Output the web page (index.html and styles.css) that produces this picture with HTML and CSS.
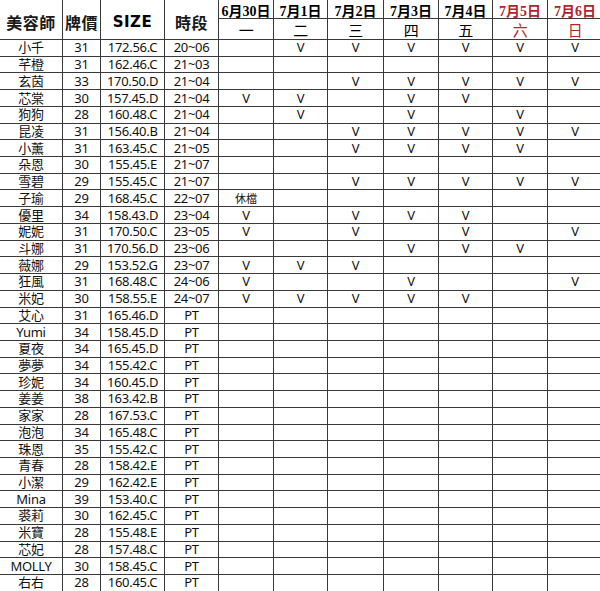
FILE: index.html
```html
<!DOCTYPE html>
<html lang="zh-Hant">
<head>
<meta charset="utf-8">
<title>班表</title>
<link rel="stylesheet" href="styles.css">
</head>
<body>
<div class="sheet">
<div class="hl title">美容師</div><div class="hl title">牌價</div><div class="hl size">SIZE</div><div class="hl title">時段</div>
<div class="date">6月30日</div><div class="date">7月1日</div><div class="date">7月2日</div><div class="date">7月3日</div><div class="date">7月4日</div><div class="date red">7月5日</div><div class="date red">7月6日</div>
<div class="wd">一</div><div class="wd">二</div><div class="wd">三</div><div class="wd">四</div><div class="wd">五</div><div class="wd red">六</div><div class="wd red">日</div>

<div>小千</div><div>31</div><div>172.56.C</div><div>20~06</div><div></div><div>V</div><div>V</div><div>V</div><div>V</div><div>V</div><div>V</div>
<div>芊橙</div><div>31</div><div>162.46.C</div><div>21~03</div><div></div><div></div><div></div><div></div><div></div><div></div><div></div>
<div>玄茵</div><div>33</div><div>170.50.D</div><div>21~04</div><div></div><div></div><div>V</div><div>V</div><div>V</div><div>V</div><div>V</div>
<div>芯棠</div><div>30</div><div>157.45.D</div><div>21~04</div><div>V</div><div>V</div><div></div><div>V</div><div>V</div><div></div><div></div>
<div>狗狗</div><div>28</div><div>160.48.C</div><div>21~04</div><div></div><div>V</div><div></div><div>V</div><div></div><div>V</div><div></div>
<div>昆凌</div><div>31</div><div>156.40.B</div><div>21~04</div><div></div><div></div><div>V</div><div>V</div><div>V</div><div>V</div><div>V</div>
<div>小薰</div><div>31</div><div>163.45.C</div><div>21~05</div><div></div><div></div><div>V</div><div>V</div><div>V</div><div>V</div><div></div>
<div>朵恩</div><div>30</div><div>155.45.E</div><div>21~07</div><div></div><div></div><div></div><div></div><div></div><div></div><div></div>
<div>雪碧</div><div>29</div><div>155.45.C</div><div>21~07</div><div></div><div></div><div>V</div><div>V</div><div>V</div><div>V</div><div>V</div>
<div>子瑜</div><div>29</div><div>168.45.C</div><div>22~07</div><div class="off">休檔</div><div></div><div></div><div></div><div></div><div></div><div></div>
<div>優里</div><div>34</div><div>158.43.D</div><div>23~04</div><div>V</div><div></div><div>V</div><div>V</div><div>V</div><div></div><div></div>
<div>妮妮</div><div>31</div><div>170.50.C</div><div>23~05</div><div>V</div><div></div><div>V</div><div></div><div>V</div><div></div><div>V</div>
<div>斗娜</div><div>31</div><div>170.56.D</div><div>23~06</div><div></div><div></div><div></div><div>V</div><div>V</div><div>V</div><div></div>
<div>薇娜</div><div>29</div><div>153.52.G</div><div>23~07</div><div>V</div><div>V</div><div>V</div><div></div><div></div><div></div><div></div>
<div>狂風</div><div>31</div><div>168.48.C</div><div>24~06</div><div>V</div><div></div><div></div><div>V</div><div></div><div></div><div>V</div>
<div>米妃</div><div>30</div><div>158.55.E</div><div>24~07</div><div>V</div><div>V</div><div>V</div><div>V</div><div>V</div><div></div><div></div>
<div>艾心</div><div>31</div><div>165.46.D</div><div>PT</div><div></div><div></div><div></div><div></div><div></div><div></div><div></div>
<div>Yumi</div><div>34</div><div>158.45.D</div><div>PT</div><div></div><div></div><div></div><div></div><div></div><div></div><div></div>
<div>夏夜</div><div>34</div><div>165.45.D</div><div>PT</div><div></div><div></div><div></div><div></div><div></div><div></div><div></div>
<div>夢夢</div><div>34</div><div>155.42.C</div><div>PT</div><div></div><div></div><div></div><div></div><div></div><div></div><div></div>
<div>珍妮</div><div>34</div><div>160.45.D</div><div>PT</div><div></div><div></div><div></div><div></div><div></div><div></div><div></div>
<div>姜姜</div><div>38</div><div>163.42.B</div><div>PT</div><div></div><div></div><div></div><div></div><div></div><div></div><div></div>
<div>家家</div><div>28</div><div>167.53.C</div><div>PT</div><div></div><div></div><div></div><div></div><div></div><div></div><div></div>
<div>泡泡</div><div>34</div><div>165.48.C</div><div>PT</div><div></div><div></div><div></div><div></div><div></div><div></div><div></div>
<div>珠恩</div><div>35</div><div>155.42.C</div><div>PT</div><div></div><div></div><div></div><div></div><div></div><div></div><div></div>
<div>青春</div><div>28</div><div>158.42.E</div><div>PT</div><div></div><div></div><div></div><div></div><div></div><div></div><div></div>
<div>小潔</div><div>29</div><div>162.42.E</div><div>PT</div><div></div><div></div><div></div><div></div><div></div><div></div><div></div>
<div>Mina</div><div>39</div><div>153.40.C</div><div>PT</div><div></div><div></div><div></div><div></div><div></div><div></div><div></div>
<div>裘莉</div><div>30</div><div>162.45.C</div><div>PT</div><div></div><div></div><div></div><div></div><div></div><div></div><div></div>
<div>米寶</div><div>28</div><div>155.48.E</div><div>PT</div><div></div><div></div><div></div><div></div><div></div><div></div><div></div>
<div>芯妃</div><div>28</div><div>157.48.C</div><div>PT</div><div></div><div></div><div></div><div></div><div></div><div></div><div></div>
<div>MOLLY</div><div>30</div><div>158.45.C</div><div>PT</div><div></div><div></div><div></div><div></div><div></div><div></div><div></div>
<div>右右</div><div>28</div><div>160.45.C</div><div>PT</div><div></div><div></div><div></div><div></div><div></div><div></div><div></div>
</div>
</body>
</html>
```

FILE: styles.css
```css
html, body {
  margin: 0;
  padding: 0;
  background: #fff;
  overflow: hidden;
}

.sheet {
  display: grid;
  grid-template-columns: 62px 37px 63px 53px 54px 53px 55px 54px 53px 54px 54px;
  grid-template-rows: 18px 20px repeat(33, 15.73px);
  gap: 1px;
  background: #3a3a3a;
  width: 602px;
  font-family: "Noto Sans", "Noto Sans CJK TC", sans-serif;
  font-size: 13px;
  color: #111;
}

.sheet > div {
  background: #fff;
  display: flex;
  align-items: center;
  justify-content: center;
  line-height: 1;
  white-space: nowrap;
  letter-spacing: -0.3px;
}

.sheet > .hl {
  grid-row: span 2;
  font-family: "Noto Sans CJK TC", sans-serif;
  font-weight: 700;
  font-size: 16px;
  letter-spacing: 0.5px;
  padding-top: 5px;
  color: #1a1a1a;
}

.sheet > .size {
  font-family: "DejaVu Sans", sans-serif;
  font-weight: 900;
  font-size: 15px;
  letter-spacing: 0.5px;
  color: #000;
}

.sheet > .date {
  font-family: "Liberation Serif", "Noto Sans CJK TC", serif;
  font-weight: 700;
  font-size: 14px;
  letter-spacing: 0;
  padding-top: 5px;
  color: #000;
}

.sheet > .wd {
  font-family: "Noto Sans CJK TC", sans-serif;
  font-size: 15px;
  padding-top: 1px;
  color: #000;
}

.sheet > .red {
  color: #b3242b;
}

.sheet > .off {
  font-family: "Noto Sans CJK TC", sans-serif;
  font-size: 11px;
  letter-spacing: 0;
}
```
